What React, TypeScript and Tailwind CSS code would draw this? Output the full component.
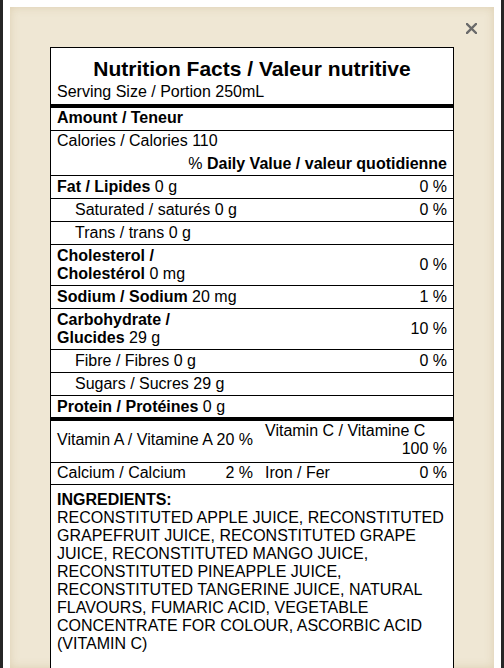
import type { ReactNode } from "react";

type Nutrient = {
  label: ReactNode;
  dv?: string;
  indent?: boolean;
};

const nutrients: Nutrient[] = [
  { label: <><b>Fat / Lipides</b> 0 g</>, dv: "0 %" },
  { label: "Saturated / saturés 0 g", dv: "0 %", indent: true },
  { label: "Trans / trans 0 g", indent: true },
  { label: <><b>Cholesterol /</b><br /><b>Cholestérol</b> 0 mg</>, dv: "0 %" },
  { label: <><b>Sodium / Sodium</b> 20 mg</>, dv: "1 %" },
  { label: <><b>Carbohydrate /</b><br /><b>Glucides</b> 29 g</>, dv: "10 %" },
  { label: "Fibre / Fibres 0 g", dv: "0 %", indent: true },
  { label: "Sugars / Sucres 29 g", indent: true },
];

const ingredients =
  "RECONSTITUTED APPLE JUICE, RECONSTITUTED GRAPEFRUIT JUICE, RECONSTITUTED GRAPE JUICE, RECONSTITUTED MANGO JUICE, RECONSTITUTED PINEAPPLE JUICE, RECONSTITUTED TANGERINE JUICE, NATURAL FLAVOURS, FUMARIC ACID, VEGETABLE CONCENTRATE FOR COLOUR, ASCORBIC ACID (VITAMIN C)";

const NutrientRow = ({ item }: { item: Nutrient }) => (
  <div className="flex items-center justify-between border-b border-black px-[6px] py-[2px] leading-[18px]">
    <span className={item.indent ? "pl-[18px]" : ""}>{item.label}</span>
    {item.dv && <span>{item.dv}</span>}
  </div>
);

export default function App() {
  return (
    <div className="h-[668px] overflow-hidden bg-[#262626] px-[3px]">
      <div className="h-full bg-white px-[7px] pt-[7px]">
        <div className="relative h-full bg-[#efe7d4] px-[40px] pt-[40px] shadow-[inset_0_0_10px_rgba(170,140,80,0.25)]">
          <button
            className="absolute right-[17px] top-[16px] text-[#6a6a6a]"
            aria-label="Close"
          >
            <svg width="11" height="11" viewBox="0 0 11 11">
              <path
                d="M1 1 L10 10 M10 1 L1 10"
                stroke="currentColor"
                strokeWidth="2.4"
                strokeLinecap="square"
              />
            </svg>
          </button>

          <div
            className="border border-black bg-white text-[16px] text-black"
            style={{ fontFamily: '"Liberation Sans", Arial, sans-serif' }}
          >
            <div className="px-[6px] pt-[9px] pb-[3px]">
              <h1 className="text-center text-[21px] font-bold leading-[24px]">
                Nutrition Facts / Valeur nutritive
              </h1>
              <div className="mt-[2px] leading-[18px]">Serving Size / Portion 250mL</div>
            </div>
            <div className="h-[4px] bg-black" />

            <div className="border-b border-black px-[6px] pt-[1px] pb-[3px] font-bold leading-[18px]">
              Amount / Teneur
            </div>
            <div className="border-b border-black px-[6px] leading-[18px]">
              <div className="pt-[1px] pb-[2px]">Calories / Calories 110</div>
              <div className="pt-[3px] pb-[2px] text-right">
                % <b>Daily Value / valeur quotidienne</b>
              </div>
            </div>

            {nutrients.map((item, i) => (
              <NutrientRow key={i} item={item} />
            ))}

            <div className="px-[6px] pt-[2px] pb-[1px] leading-[18px]">
              <b>Protein / Protéines</b> 0 g
            </div>
            <div className="h-[4px] bg-black" />

            <div className="grid grid-cols-[208px_1fr] border-b border-black leading-[18px]">
              <div className="flex items-center whitespace-nowrap px-[6px] pt-[1px] pb-[4px]">
                Vitamin A / Vitamine A 20 %
              </div>
              <div className="px-[6px] pt-[1px] pb-[4px]">
                <div>Vitamin C / Vitamine C</div>
                <div className="text-right">100 %</div>
              </div>
            </div>
            <div className="grid grid-cols-[208px_1fr] border-b border-black leading-[18px]">
              <div className="flex justify-between px-[6px] pt-[1px] pb-[2px]">
                <span>Calcium / Calcium</span>
                <span>2 %</span>
              </div>
              <div className="flex justify-between px-[6px] pt-[1px] pb-[2px]">
                <span>Iron / Fer</span>
                <span>0 %</span>
              </div>
            </div>

            <div className="px-[6px] pt-[6px] pb-[40px] leading-[18px]">
              <div className="font-bold">INGREDIENTS:</div>
              <div>{ingredients}</div>
            </div>
          </div>
        </div>
      </div>
    </div>
  );
}
